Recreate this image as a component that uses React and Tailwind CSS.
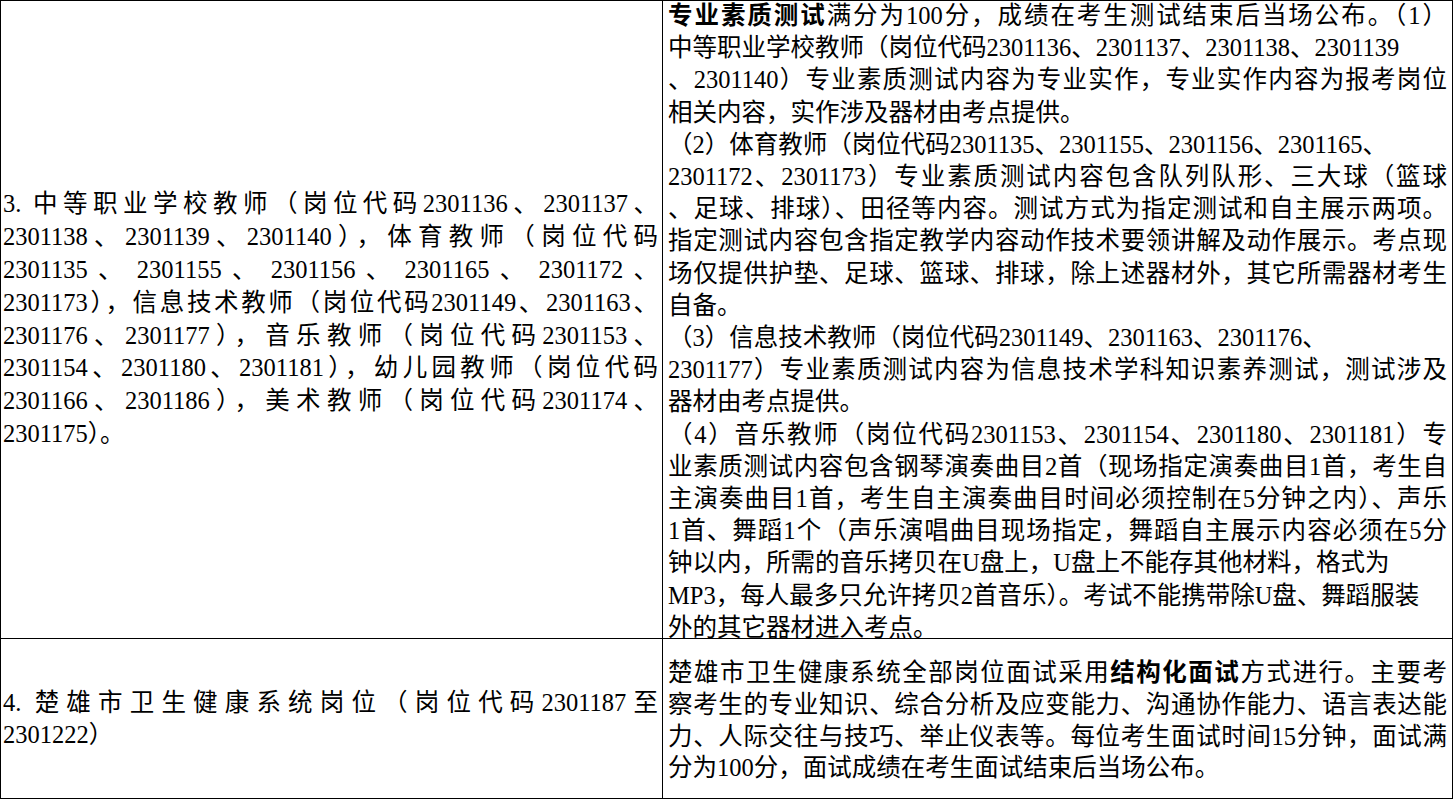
const FONT = 'font-["Liberation_Serif","Noto_Sans_CJK_SC",serif]'

// j: stretch this line to the full cell width
const leftRow1 = [
  { t: '3. 中等职业学校教师（岗位代码2301136、2301137、', j: true },
  { t: '2301138、2301139、2301140），体育教师（岗位代码', j: true },
  { t: '2301135 、 2301155 、 2301156 、 2301165 、 2301172 、', j: true },
  { t: '2301173），信息技术教师（岗位代码2301149、2301163、', j: true },
  { t: '2301176、2301177），音乐教师（岗位代码2301153、', j: true },
  { t: '2301154、2301180、2301181），幼儿园教师（岗位代码', j: true },
  { t: '2301166、2301186），美术教师（岗位代码2301174、', j: true },
  { t: '2301175）。', j: false },
]

const rightRow1 = [
  { b: '专业素质测试', t: '满分为100分，成绩在考生测试结束后当场公布。（1）', j: true },
  { t: '中等职业学校教师（岗位代码2301136、2301137、2301138、2301139', j: false },
  { t: '、2301140）专业素质测试内容为专业实作，专业实作内容为报考岗位', j: true },
  { t: '相关内容，实作涉及器材由考点提供。', j: false },
  { t: '（2）体育教师（岗位代码2301135、2301155、2301156、2301165、', j: false },
  { t: '2301172、2301173）专业素质测试内容包含队列队形、三大球（篮球', j: true },
  { t: '、足球、排球）、田径等内容。测试方式为指定测试和自主展示两项。', j: true },
  { t: '指定测试内容包含指定教学内容动作技术要领讲解及动作展示。考点现', j: true },
  { t: '场仅提供护垫、足球、篮球、排球，除上述器材外，其它所需器材考生', j: true },
  { t: '自备。', j: false },
  { t: '（3）信息技术教师（岗位代码2301149、2301163、2301176、', j: false },
  { t: '2301177）专业素质测试内容为信息技术学科知识素养测试，测试涉及', j: true },
  { t: '器材由考点提供。', j: false },
  { t: '（4）音乐教师（岗位代码2301153、2301154、2301180、2301181）专', j: true },
  { t: '业素质测试内容包含钢琴演奏曲目2首（现场指定演奏曲目1首，考生自', j: true },
  { t: '主演奏曲目1首，考生自主演奏曲目时间必须控制在5分钟之内）、声乐', j: true },
  { t: '1首、舞蹈1个（声乐演唱曲目现场指定，舞蹈自主展示内容必须在5分', j: true },
  { t: '钟以内，所需的音乐拷贝在U盘上，U盘上不能存其他材料，格式为', j: false },
  { t: 'MP3，每人最多只允许拷贝2首音乐）。考试不能携带除U盘、舞蹈服装', j: false },
  { t: '外的其它器材进入考点。', j: false },
]

const leftRow2 = [
  { t: '4. 楚雄市卫生健康系统岗位（岗位代码2301187至', j: true },
  { t: '2301222）', j: false },
]

const rightRow2 = [
  { t: '楚雄市卫生健康系统全部岗位面试采用', b2: '结构化面试', t2: '方式进行。主要考', j: true },
  { t: '察考生的专业知识、综合分析及应变能力、沟通协作能力、语言表达能', j: true },
  { t: '力、人际交往与技巧、举止仪表等。每位考生面试时间15分钟，面试满', j: true },
  { t: '分为100分，面试成绩在考生面试结束后当场公布。', j: false },
]

function Lines({ lines }) {
  return lines.map((l, i) => (
    <div key={i}
      className={`whitespace-nowrap ${l.j ? 'text-justify [text-align-last:justify]' : 'text-left'}`}>
      {l.b && <b className="font-bold">{l.b}</b>}
      {l.t}
      {l.b2 && <b className="font-bold">{l.b2}</b>}
      {l.t2}
    </div>
  ))
}

export default function App() {
  return (
    <div className={`bg-white text-black ${FONT} text-[24.5px] leading-[31.8px] w-[1454px] h-[800px] overflow-hidden`}>
      <table className="border-collapse w-[1453px] table-fixed">
        <colgroup>
          <col className="w-[662px]" />
          <col />
        </colgroup>
        <tbody>
          <tr className="h-[637px]">
            <td className="border-[1.5px] border-black align-middle pl-[2px] pr-[4px] leading-[32.8px]">
              <Lines lines={leftRow1} />
            </td>
            <td className="border-[1.5px] border-black align-top pl-[5px] pr-[5px] pt-0 leading-[32.2px]">
              <div className="-mt-[1px] -mb-[6px]">
                <Lines lines={rightRow1} />
              </div>
            </td>
          </tr>
          <tr className="h-[160px]">
            <td className="border-[1.5px] border-black align-middle pl-[2px] pr-[4px]">
              <Lines lines={leftRow2} />
            </td>
            <td className="border-[1.5px] border-black align-middle pl-[5px] pr-[5px] pt-[4px]">
              <Lines lines={rightRow2} />
            </td>
          </tr>
        </tbody>
      </table>
    </div>
  )
}
